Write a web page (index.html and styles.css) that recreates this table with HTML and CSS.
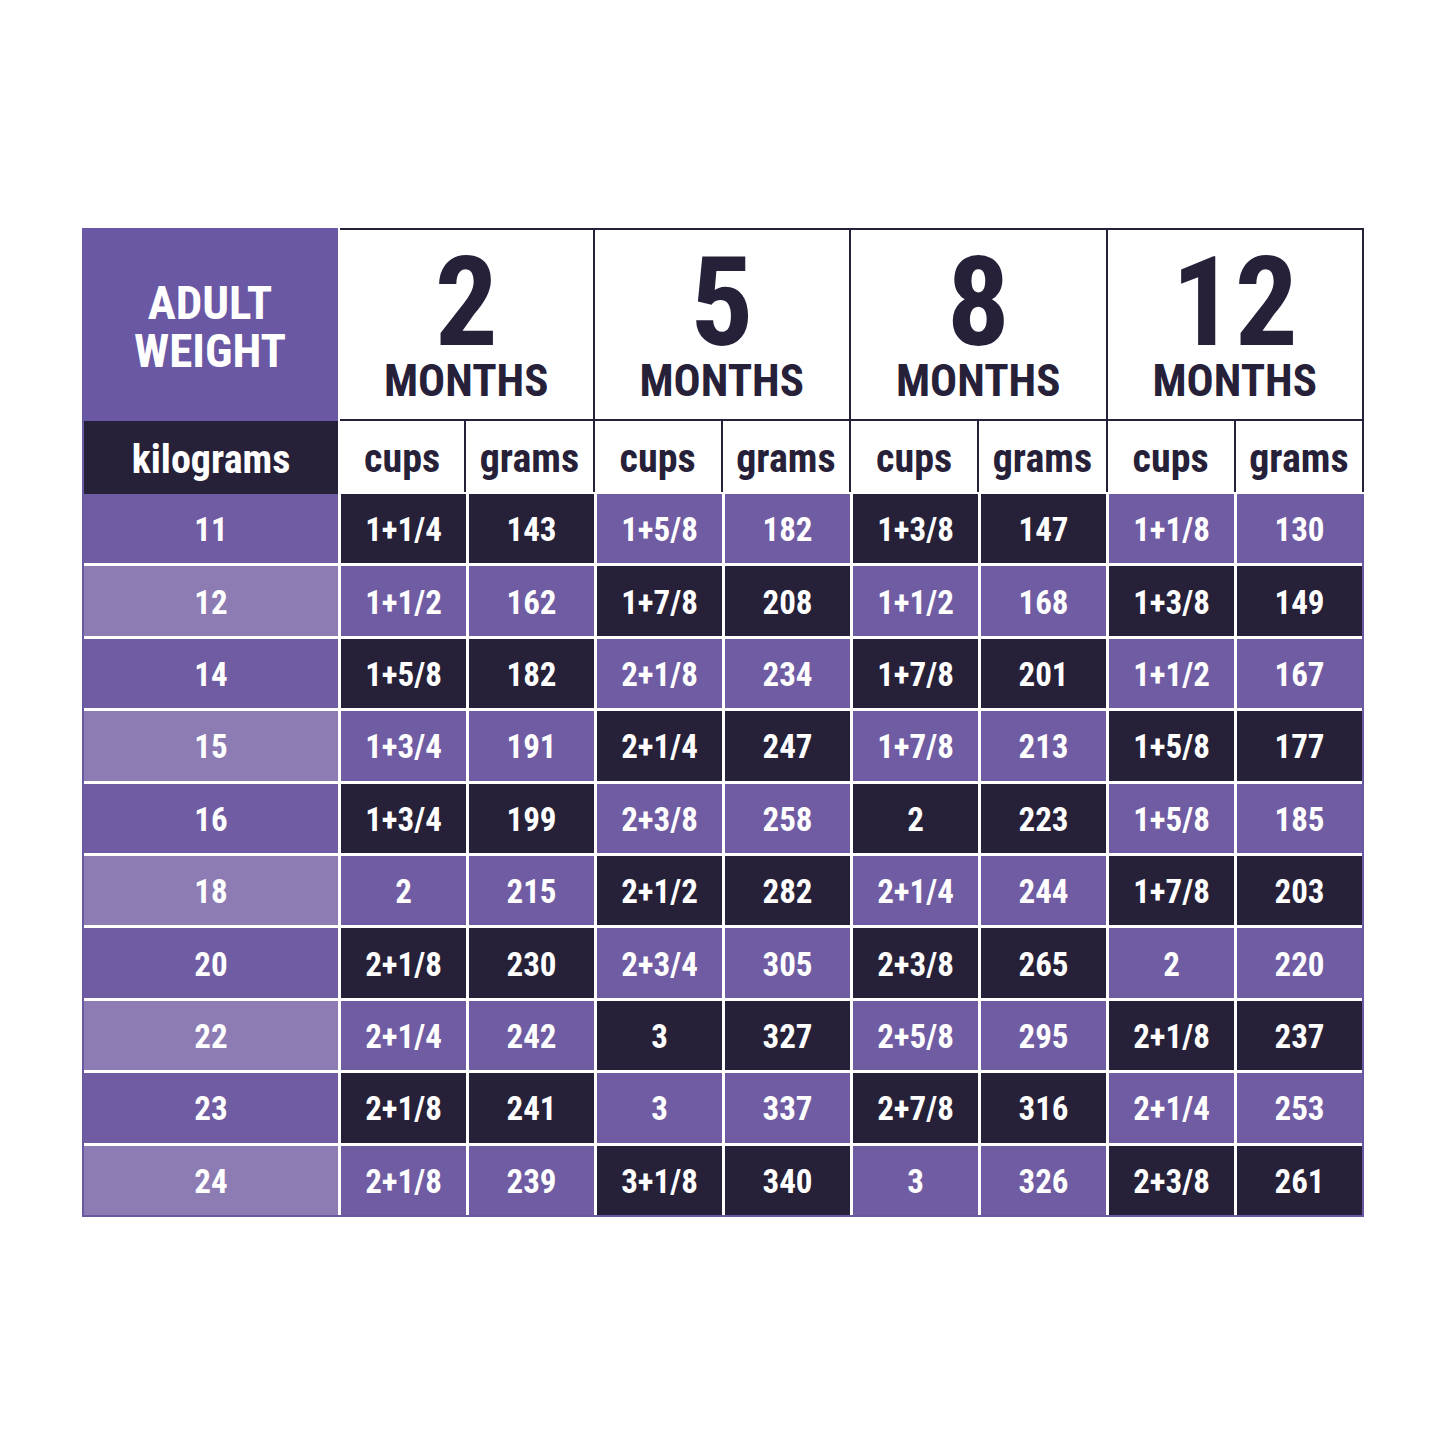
FILE: index.html
```html
<!DOCTYPE html>
<html lang="en">
<head>
<meta charset="utf-8">
<title>Feeding chart</title>
<link rel="stylesheet" href="styles.css">
</head>
<body>
<div class="chart">
  <div class="head">
    <div class="title">ADULT<br>WEIGHT</div>
    <div class="month first"><span class="num">2</span><span class="mo">MONTHS</span></div>
    <div class="month"><span class="num">5</span><span class="mo">MONTHS</span></div>
    <div class="month"><span class="num">8</span><span class="mo">MONTHS</span></div>
    <div class="month last"><span class="num">12</span><span class="mo">MONTHS</span></div>
    <div class="unit">kilograms</div>
    <div class="sub first">cups</div><div class="sub">grams</div>
    <div class="sub">cups</div><div class="sub">grams</div>
    <div class="sub">cups</div><div class="sub">grams</div>
    <div class="sub">cups</div><div class="sub">grams</div>
  </div>
  <div class="data">
    <div class="kg">11</div><div class="d">1+1/4</div><div class="d">143</div><div class="p">1+5/8</div><div class="p">182</div><div class="d">1+3/8</div><div class="d">147</div><div class="p">1+1/8</div><div class="p">130</div>
    <div class="kg lt">12</div><div class="p">1+1/2</div><div class="p">162</div><div class="d">1+7/8</div><div class="d">208</div><div class="p">1+1/2</div><div class="p">168</div><div class="d">1+3/8</div><div class="d">149</div>
    <div class="kg">14</div><div class="d">1+5/8</div><div class="d">182</div><div class="p">2+1/8</div><div class="p">234</div><div class="d">1+7/8</div><div class="d">201</div><div class="p">1+1/2</div><div class="p">167</div>
    <div class="kg lt">15</div><div class="p">1+3/4</div><div class="p">191</div><div class="d">2+1/4</div><div class="d">247</div><div class="p">1+7/8</div><div class="p">213</div><div class="d">1+5/8</div><div class="d">177</div>
    <div class="kg">16</div><div class="d">1+3/4</div><div class="d">199</div><div class="p">2+3/8</div><div class="p">258</div><div class="d">2</div><div class="d">223</div><div class="p">1+5/8</div><div class="p">185</div>
    <div class="kg lt">18</div><div class="p">2</div><div class="p">215</div><div class="d">2+1/2</div><div class="d">282</div><div class="p">2+1/4</div><div class="p">244</div><div class="d">1+7/8</div><div class="d">203</div>
    <div class="kg">20</div><div class="d">2+1/8</div><div class="d">230</div><div class="p">2+3/4</div><div class="p">305</div><div class="d">2+3/8</div><div class="d">265</div><div class="p">2</div><div class="p">220</div>
    <div class="kg lt">22</div><div class="p">2+1/4</div><div class="p">242</div><div class="d">3</div><div class="d">327</div><div class="p">2+5/8</div><div class="p">295</div><div class="d">2+1/8</div><div class="d">237</div>
    <div class="kg">23</div><div class="d">2+1/8</div><div class="d">241</div><div class="p">3</div><div class="p">337</div><div class="d">2+7/8</div><div class="d">316</div><div class="p">2+1/4</div><div class="p">253</div>
    <div class="kg lt">24</div><div class="p">2+1/8</div><div class="p">239</div><div class="d">3+1/8</div><div class="d">340</div><div class="p">3</div><div class="p">326</div><div class="d">2+3/8</div><div class="d">261</div>
  </div>
</div>
</body>
</html>
```
FILE: styles.css
```css
html, body {
  margin: 0;
  padding: 0;
  background: #ffffff;
}
body {
  font-family: "Roboto Condensed", "Open Sans", "DejaVu Sans Condensed", sans-serif;
  font-stretch: 75%;
  font-weight: bold;
}
.chart {
  width: 1282px;
  margin: 228px 0 0 82px;
}
.head {
  display: grid;
  grid-template-columns: 256px repeat(8, 1fr);
  grid-template-rows: 193px 73px;
}
.title {
  background: #6a58a5;
  color: #ffffff;
  font-size: 47px;
  line-height: 48px;
  display: flex;
  align-items: center;
  justify-content: center;
  text-align: center;
  padding-top: 4px;
}
.month {
  grid-column: span 2;
  border-top: 2px solid #262139;
  border-bottom: 2px solid #262139;
  border-right: 2px solid #262139;
  color: #262139;
  display: flex;
  flex-direction: column;
  align-items: center;
  justify-content: center;
  padding-top: 6px;
}
.month.first {
  margin-left: 2px;
}
.num {
  font-size: 125px;
  line-height: 100px;
  margin-bottom: 6px;
}
.mo {
  font-size: 45px;
  line-height: 44px;
}
.unit {
  background: #262139;
  border-left: 2px solid #6b58a3;
  color: #ffffff;
  font-size: 40px;
  display: flex;
  align-items: center;
  justify-content: center;
  padding-top: 3px;
}
.sub {
  border-right: 2px solid #262139;
  color: #262139;
  font-size: 40px;
  display: flex;
  align-items: center;
  justify-content: center;
  padding-top: 4px;
  margin-bottom: 2px;
}
.sub.first {
  margin-left: 2px;
}
.data {
  display: grid;
  grid-template-columns: 254px repeat(8, 1fr);
  grid-template-rows: repeat(10, 1fr);
  gap: 3px;
  height: 721px;
  background: #ffffff;
  border: 2px solid #6b58a3;
  border-top: 0;
}
.data > div {
  display: flex;
  align-items: center;
  justify-content: center;
  color: #ffffff;
  font-size: 33px;
  padding-top: 2px;
}
.kg {
  background: #705ca3;
}
.kg.lt {
  background: #8d7bb4;
}
.d {
  background: #262139;
}
.p {
  background: #705ca3;
}
```
